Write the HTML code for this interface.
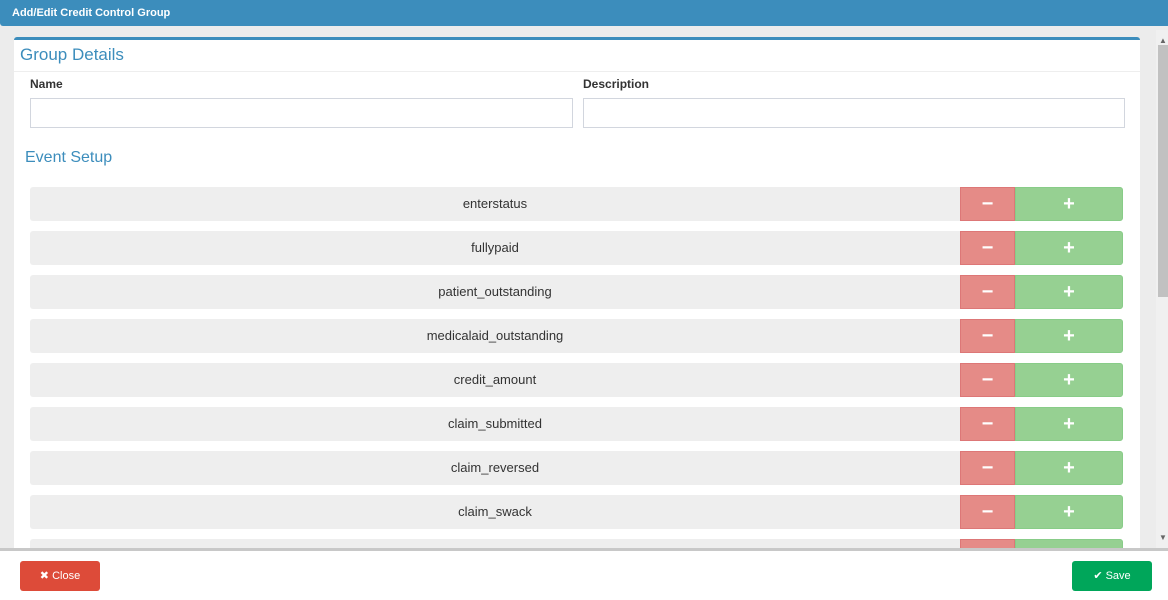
<!DOCTYPE html><html><head><style>
*{box-sizing:border-box;margin:0;padding:0}
body{width:1168px;height:600px;overflow:hidden;background:#ececec;font-family:"Liberation Sans",sans-serif;position:relative}
.hdr{position:absolute;left:0;top:0;width:1168px;height:26px;background:#3c8dbc;color:#fff;font-weight:bold;font-size:11px;padding:7px 12px;border-radius:0 0 0 3px}
.panel{position:absolute;left:14px;top:37px;width:1126px;height:520px;background:#fff;border-top:3px solid #3c8dbc;border-radius:3px}
.h{color:#3c8dbc;font-size:17px;position:absolute;left:6px}
.line{position:absolute;left:0;right:0;top:31px;border-top:1px solid #eee}
.lbl{position:absolute;font-weight:bold;font-size:12px;color:#333;top:37px}
.inp{position:absolute;top:58px;height:30px;border:1px solid #d2d6de;width:543px}
.row{position:absolute;left:16px;width:1093px;height:34px;background:#eeeeee;border-radius:3px;font-size:13px;color:#333;text-align:center;line-height:34px}
.row span{display:block;width:930px}
.m{position:absolute;left:930px;top:0;width:55px;height:34px;background:#e58b87;color:#fff;font-weight:bold;font-size:20px;line-height:32px;text-align:center;border:1px solid #d77}
.p{position:absolute;left:985px;top:0;width:108px;height:34px;background:#96d092;color:#fff;font-weight:bold;font-size:20px;line-height:32px;text-align:center;border-radius:0 3px 3px 0;border:1px solid #8c8}
.sb{position:absolute;left:1156px;top:30px;width:12px;height:518px;background:#f0f0f0}
.th{position:absolute;left:1158px;top:45px;width:10px;height:252px;background:#c1c1c1}
.foot{position:absolute;left:0;top:548px;width:1168px;height:52px;background:#fff;border-top:3px solid #c8c8c8}
.btn{position:absolute;top:10px;width:80px;height:30px;border-radius:3px;color:#fff;font-size:11px;text-align:center;line-height:30px}
</style></head><body>
<div class="hdr">Add/Edit Credit Control Group</div>
<div class="panel">
<div class="h" style="top:5px">Group Details</div><div class="line"></div>
<div class="lbl" style="left:16px">Name</div><div class="lbl" style="left:569px">Description</div>
<div class="inp" style="left:16px"></div><div class="inp" style="left:569px;width:542px"></div>
<div class="h" style="top:109px;left:11px;font-size:16px">Event Setup</div>
<div class="row" style="top:147px"><span>enterstatus</span><div class="m">−</div><div class="p">+</div></div>
<div class="row" style="top:191px"><span>fullypaid</span><div class="m">−</div><div class="p">+</div></div>
<div class="row" style="top:235px"><span>patient_outstanding</span><div class="m">−</div><div class="p">+</div></div>
<div class="row" style="top:279px"><span>medicalaid_outstanding</span><div class="m">−</div><div class="p">+</div></div>
<div class="row" style="top:323px"><span>credit_amount</span><div class="m">−</div><div class="p">+</div></div>
<div class="row" style="top:367px"><span>claim_submitted</span><div class="m">−</div><div class="p">+</div></div>
<div class="row" style="top:411px"><span>claim_reversed</span><div class="m">−</div><div class="p">+</div></div>
<div class="row" style="top:455px"><span>claim_swack</span><div class="m">−</div><div class="p">+</div></div>
<div class="row" style="top:499px"><span></span><div class="m"></div><div class="p"></div></div>
</div>
<div class="sb"></div><div class="th"></div>
<div style="position:absolute;left:1159px;top:36px;font-size:8px;color:#666">▲</div>
<div style="position:absolute;left:1159px;top:533px;font-size:8px;color:#666">▼</div>
<div class="foot">
<div class="btn" style="left:20px;background:#dd4b39">✖ Close</div>
<div class="btn" style="left:1072px;background:#00a65a">✔ Save</div>
</div>
</body></html>
